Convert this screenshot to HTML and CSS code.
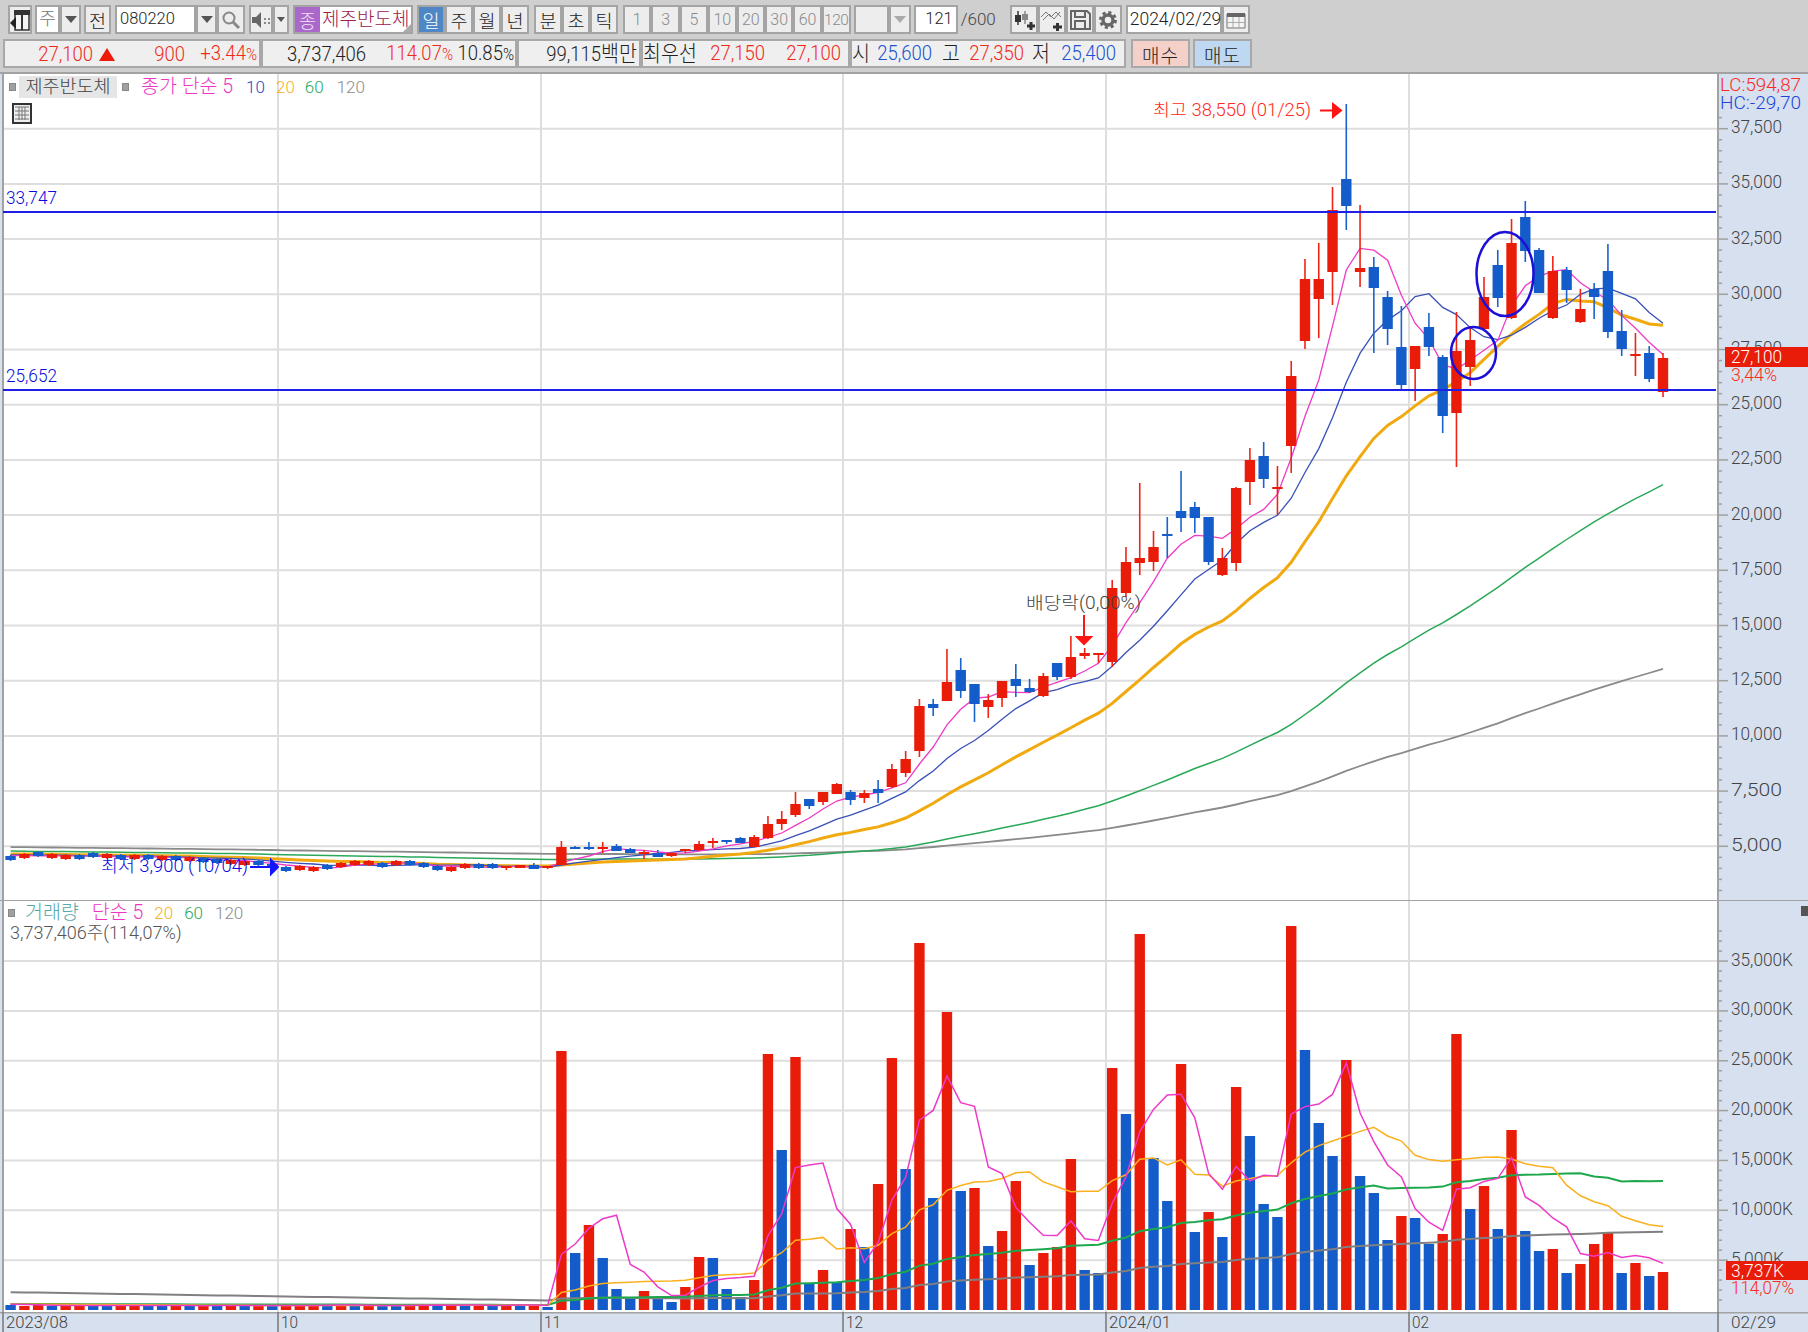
FILE: index.html
```html
<!DOCTYPE html>
<html lang="ko">
<head>
<meta charset="utf-8">
<title>제주반도체 차트</title>
<link rel="stylesheet" href="styles.css">
</head>
<body>
<div class="app">
  <div class="toolbar">
    <button class="btn w24"><svg width="20" height="24" viewBox="0 0 20 24"><path d="M5 3h14v19H5z" fill="#f4f4f4" stroke="#333" stroke-width="1.5"/><path d="M4 2h16v5H4z" fill="#333"/><path d="M12 7v15" stroke="#333" stroke-width="2"/><path d="M0 15l6-6v12z" fill="#222"/></svg></button>
    <div class="group mr3">
      <span class="field w25 dim center">주</span>
      <button class="btn w21"><i class="tri"></i></button>
    </div>
    <button class="btn w27 mr4">전</button>
    <div class="group mr4">
      <span class="field w81 pl">080220</span>
      <button class="btn w21"><i class="tri"></i></button>
      <button class="btn w28"><svg width="20" height="20" viewBox="0 0 20 20"><circle cx="8" cy="8" r="5.5" fill="none" stroke="#888" stroke-width="2"/><path d="M12 12l6 6" stroke="#888" stroke-width="3"/></svg></button>
    </div>
    <div class="group mr4">
      <button class="btn w24"><svg width="20" height="20" viewBox="0 0 20 20"><path d="M1 7h4l5-5v16l-5-5H1z" fill="#666"/><path d="M13 8h2v2h-2zM17 8h2v2h-2zM13 12h2v2h-2zM17 12h2v2h-2z" fill="#888"/></svg></button>
      <button class="btn w16"><i class="tri small"></i></button>
    </div>
    <div class="group mr4 namebox">
      <span class="badge">종</span>
      <span class="name">제주반도체<i class="corner"></i></span>
    </div>
    <div class="group mr5">
      <button class="btn w28 active">일</button>
      <button class="btn w28">주</button>
      <button class="btn w28">월</button>
      <button class="btn w28">년</button>
    </div>
    <div class="group mr5">
      <button class="btn w28">분</button>
      <button class="btn w28">초</button>
      <button class="btn w28">틱</button>
    </div>
    <div class="group mr3 off">
      <button class="btn w28">1</button>
      <button class="btn w28">3</button>
      <button class="btn w28">5</button>
      <button class="btn w28">10</button>
      <button class="btn w28">20</button>
      <button class="btn w28">30</button>
      <button class="btn w28">60</button>
      <button class="btn w29">120</button>
    </div>
    <div class="group mr3">
      <span class="btn w35"></span>
      <button class="btn w22"><i class="tri pale"></i></button>
    </div>
    <span class="field w44 right">121</span>
    <span class="count">/600</span>
    <div class="group mr4">
      <button class="btn w28"><svg width="24" height="24" viewBox="0 0 24 24"><path d="M6 3v14" stroke="#333" stroke-width="1.5"/><path d="M3 7h6v7H3z" fill="#333"/><path d="M13 3v13" stroke="#888" stroke-width="1.5"/><path d="M10 6h6v6h-6z" fill="#888"/><path d="M15 18h8M19 14v8" stroke="#333" stroke-width="3"/></svg></button>
      <button class="btn w28"><svg width="24" height="24" viewBox="0 0 24 24"><path d="M1 9l5-5 5 5 5-5 5 5M3 12l6-6 5 5 6-7" fill="none" stroke="#777"/><path d="M13 19h9M17.500 15v8" stroke="#333" stroke-width="3"/></svg></button>
      <button class="btn w28"><svg width="22" height="22" viewBox="0 0 22 22"><path d="M2 2h16l3 3v15H2z" fill="none" stroke="#666" stroke-width="2"/><path d="M6 2v6h10V2M6 20v-8h10v8" fill="none" stroke="#666" stroke-width="2"/></svg></button>
      <button class="btn w28"><svg width="20" height="20" viewBox="0 0 20 20"><circle cx="10" cy="10" r="5" fill="none" stroke="#666" stroke-width="3.500"/><circle cx="10" cy="10" r="7.500" fill="none" stroke="#666" stroke-width="3" stroke-dasharray="3.100 2.800"/></svg></button>
    </div>
    <div class="group">
      <span class="field w96 pl date">2024/02/29</span>
      <button class="btn w28"><svg width="20" height="18" viewBox="0 0 20 18"><path d="M1 3h18v14H1z" fill="#f4f4f4" stroke="#777"/><path d="M1 2h18v4H1z" fill="#666"/><path d="M7 6v11M13 6v11M1 11.500h18" stroke="#aaa"/></svg></button>
    </div>
  </div>

  <div class="quotebar">
    <div class="seg seg1">
      <span class="up">27,100</span><span class="arrow-cell"><i class="up-tri"></i></span><span class="up">900</span><span class="up">+3.44<em class="pct">%</em></span>
    </div>
    <div class="seg seg2">
      <span>3,737,406</span><span class="up">114.07<em class="pct">%</em></span><span>10.85<em class="pct">%</em></span>
    </div>
    <div class="seg seg3"><span>99,115<em class="ko">백만</em></span></div>
    <div class="seg seg4">
      <span class="ko">최우선</span><span class="up">27,150</span><span class="up">27,100</span>
    </div>
    <div class="seg seg5">
      <span class="ko">시</span><span class="down">25,600</span><span class="ko">고</span><span class="up">27,350</span><span class="ko">저</span><span class="down">25,400</span>
    </div>
    <button class="trade buy">매수</button>
    <button class="trade sell">매도</button>
  </div>

  <div class="chart">
    <section class="panel price-panel">
      <svg id="price" class="plot" width="1808" height="828" viewBox="0 72 1808 828"></svg>
      <div class="legend price-legend">
        <i class="dot"></i><span class="chip">제주반도체</span><i class="dot"></i>
        <span class="magenta ko-size lead">종가 단순 5</span><span class="blue">10</span><span class="orange">20</span><span class="green">60</span><span class="gray">120</span>
      </div>
      <svg class="table-icon" width="20" height="21" viewBox="0 0 20 21"><path d="M1 1h18v19H1z" fill="#eee" stroke="#333" stroke-width="2"/><path d="M3 4h14M3 8h14M3 12h14M3 16h14M7 4v13M10 4v13M13 4v13" stroke="#777"/></svg>
    </section>
    <section class="panel volume-panel">
      <svg id="volume" class="plot" width="1808" height="412" viewBox="0 900 1808 412"></svg>
      <div class="legend volume-legend">
        <div class="legend-row">
          <i class="dot"></i><span class="teal ko-size">거래량</span><span class="magenta ko-size">단순 5</span><span class="orange">20</span><span class="green">60</span><span class="gray">120</span>
        </div>
        <div class="legend-note">3,737,406주(114,07%)</div>
      </div>
    </section>
    <svg id="dates" class="plot" width="1808" height="20" viewBox="0 1312 1808 20"></svg>
  </div>
</div>
<script src="chart.js"></script>
</body>
</html>
```
FILE: styles.css
```css
* { box-sizing: border-box; }
html, body { margin: 0; padding: 0; background: #cfcfcf; }
body { font-family: Roboto, "Noto Sans CJK KR", "Liberation Sans", sans-serif; font-weight: 300; color: #222; }
.app { width: 1808px; height: 1332px; overflow: hidden; display: flex; flex-direction: column; }

.toolbar { display: flex; align-items: stretch; height: 29px; margin: 5px 0 0 8px; }
.group { display: flex; align-items: stretch; }
.btn { display: flex; align-items: center; justify-content: center; height: 29px; padding: 0; border: 2px solid #a4a4a4; background: #ededed; font: inherit; font-size: 18.500px; color: #222; overflow: hidden; }
.toolbar > .btn:first-child { margin-right: 3px; }
.field { display: flex; align-items: center; height: 29px; background: #fff; border: 2px solid #a4a4a4; font-size: 16.500px; line-height: 1; }
.center { justify-content: center; font-size: 18.500px; }
.dim { color: #777; }
.pl { padding-left: 3px; }
.right { justify-content: flex-end; padding-right: 3px; }
.w16 { width: 16px; } .w21 { width: 21px; } .w22 { width: 22px; } .w24 { width: 24px; } .w25 { width: 25px; }
.w27 { width: 27px; } .w28 { width: 28px; } .w29 { width: 29px; } .w35 { width: 35px; } .w44 { width: 44px; }
.w81 { width: 81px; } .w96 { width: 96px; }
.mr3 { margin-right: 3px; } .mr4 { margin-right: 4px; } .mr5 { margin-right: 5px; }
.date { font-size: 17.500px; padding-left: 2px; }
.tri { width: 0; height: 0; border-left: 6px solid transparent; border-right: 6px solid transparent; border-top: 7px solid #555; }
.tri.small { border-left-width: 4px; border-right-width: 4px; border-top-width: 5px; }
.tri.pale { border-top-color: #aaa; }
.namebox { border: 2px solid #a4a4a4; background: #fff; width: 120px; }
.badge { width: 25px; background: #ab68cb; color: #f2e4f8; font-size: 18.500px; display: flex; align-items: center; justify-content: center; }
.name { position: relative; flex: 1; color: #9b2050; font-size: 19px; line-height: 25px; padding-left: 2px; white-space: nowrap; overflow: hidden; }
.corner { position: absolute; right: 0; bottom: 0; width: 0; height: 0; border-left: 8px solid transparent; border-bottom: 8px solid #aaa; }
.active { background: #4f86c6; color: #fff; }
.off .btn { color: #8a8a8a; font-size: 16px; width: 28.400px; }
.off .w29 { font-size: 15.500px; letter-spacing: -0.400px; width: 29px; }
.count { width: 52px; font-size: 17px; line-height: 29px; padding-left: 3px; color: #444; }

.quotebar { display: flex; height: 29px; margin: 5px 0 0 3px; }
.seg { display: grid; align-items: center; height: 29px; border: 2px solid #a8a8a8; background: #efefef; font-size: 18.500px; white-space: nowrap; }
.seg span { text-align: right; display: block; transform: scaleY(1.12); line-height: 25px; }
.seg .ko, .ko { font-size: 19.500px; font-style: normal; }
.pct { font-size: 15px; font-style: normal; }
.seg1 { width: 258px; grid-template-columns: 88px 23px 69px 72px; }
.seg2 { width: 256px; grid-template-columns: 103px 87px 61px; }
.seg3 { width: 124px; grid-template-columns: 118px; }
.seg4 { width: 209px; grid-template-columns: 53px 69px 76px; }
.seg5 { width: 276px; grid-template-columns: 15px 65px 28px 64px 26px 66px; margin-right: 5px; }
.up { color: #f02a18; }
.down { color: #2050d0; }
.seg .arrow-cell { transform: none; text-align: left; padding-left: 6px; }
.up-tri { display: block; width: 0; height: 0; border-left: 8px solid transparent; border-right: 8px solid transparent; border-bottom: 13px solid #ee1c08; }
.trade { width: 59px; height: 29px; margin-right: 3px; border: 2px solid #a8a8a8; font: inherit; font-size: 19px; color: #222; padding: 0; letter-spacing: 1px; }
.buy { background: #f5d0c9; }
.sell { background: #bdd8f0; }

.chart { margin-top: 4px; display: flex; flex-direction: column; }
.panel { position: relative; }
.plot { display: block; }
.price-panel { height: 828px; }
.volume-panel { height: 412px; }

.legend { position: absolute; font-size: 17px; line-height: 20px; white-space: nowrap; }
.ko-size { font-size: 19.500px; }
.price-legend { left: 9px; top: 4px; display: flex; align-items: center; height: 22px; }
.dot { display: block; width: 7px; height: 8px; background: #a0a0a0; border: 1px solid #888; }
.chip { background: #e6e6e6; color: #444; width: 98px; height: 22px; margin: 0 5px 0 3px; text-align: center; font-size: 18.500px; line-height: 22px; }
.lead { margin: 0 13px 0 12px; }
.price-legend .blue { margin-right: 11px; }
.price-legend .orange { margin-right: 10px; }
.price-legend .green { margin-right: 13px; }
.magenta { color: #ee35c4; }
.blue { color: #2448c8; }
.orange { color: #f8ae20; }
.green { color: #2aa858; }
.gray { color: #8c8c8c; }
.teal { color: #55a8a8; }
.volume-legend { left: 8px; top: 3px; }
.legend-row { display: flex; align-items: center; height: 20px; }
.legend-row .teal { margin: 0 13px 0 10px; }
.legend-row .magenta { margin-right: 11px; }
.legend-row .orange { margin-right: 11px; }
.legend-row .green { margin-right: 12px; }
.legend-note { color: #555; padding-left: 2px; font-size: 18px; line-height: 20px; }
.table-icon { position: absolute; left: 12px; top: 31px; }

/* svg chart parts */
.bg-plot { fill: #fff; }
.bg-axis { fill: #d6e0ee; }
.grid { stroke: #dedede; stroke-width: 2; }
.frame { stroke: #a2a2a2; stroke-width: 2; }
.tick { stroke: #a0a0a0; stroke-width: 1.500; }
.hline { stroke: #1f1fe6; stroke-width: 2; }
.ring { fill: none; stroke: #1c0fd8; stroke-width: 2.500; }
.ma5 { fill: none; stroke: #ee3ac8; stroke-width: 1.300; }
.ma10 { fill: none; stroke: #3850b8; stroke-width: 1.300; }
.ma20 { fill: none; stroke: #f0aa10; stroke-width: 3; }
.ma60 { fill: none; stroke: #2aa858; stroke-width: 1.500; }
.ma120 { fill: none; stroke: #8a8a8a; stroke-width: 1.800; }
.vma5 { fill: none; stroke: #ee3ac8; stroke-width: 1.500; }
.vma20 { fill: none; stroke: #fbb01e; stroke-width: 1.500; }
.vma60 { fill: none; stroke: #1ea84e; stroke-width: 2; }
.vma120 { fill: none; stroke: #808080; stroke-width: 2; }
.fill-r { fill: #e81c08; }
.fill-b { fill: #135cc9; }
.wick-r { stroke: #ee2414; stroke-width: 1.600; }
.wick-b { stroke: #1a62cc; stroke-width: 1.600; }
.arrow-r { stroke: #ff1414; stroke-width: 2; fill: #ff1414; }
.arrow-b { stroke: #1414ff; stroke-width: 2; fill: #1414ff; }
.tag { fill: #e81c08; }
.dark-tick { stroke: #777; stroke-width: 1.500; }
.mini { fill: #555; }
text { font-family: Roboto, "Noto Sans CJK KR", "Liberation Sans", sans-serif; font-weight: 300; font-size: 17.500px; }
.t-axis { fill: #444; }
.t-red { fill: #ff2a20; }
.t-blue { fill: #2244dd; }
.t-line-blue { fill: #0a0ae0; }
.t-note { fill: #444; }
.t-white { fill: #fff; }
.t-date { fill: #444; font-size: 16.500px; }
```
FILE: chart.js
```js
(function () {
  var NS = 'http://www.w3.org/2000/svg';
  function add(p, tag, attrs, txt) {
    var e = document.createElementNS(NS, tag);
    for (var k in attrs) e.setAttribute(k, attrs[k]);
    if (txt !== undefined) e.textContent = txt;
    p.appendChild(e);
    return e;
  }
  function text(p, x, y, s, cls, len) {
    var a = { x: x, y: y, class: cls };
    if (len) { a.textLength = len; a.lengthAdjust = 'spacingAndGlyphs'; }
    return add(p, 'text', a, s);
  }
  function X(k) { return 1663 - 13.77 * k; }
  function ma(series, n, idx) {
    var s = 0;
    for (var i = idx - n + 1; i <= idx; i++) s += series[i];
    return s / n;
  }
  function maLine(p, series, n, offset, cls) {
    var pts = [];
    for (var i = offset; i < series.length; i++) {
      pts.push(X(series.length - 1 - i).toFixed(1) + ',' + ma(series, n, i).toFixed(1));
    }
    add(p, 'polyline', { points: pts.join(' '), class: cls });
  }

  /* newest first: colour, body top, body bottom, wick top, wick bottom (px) */
  var candles = [
    ['r',358,392,353,397],['b',353,379,346,382],['r',354,356,333,376],['b',331,349,310,356],['b',271,332,244,338],
    ['b',289,297,283,319],['r',309,322,289,323],['b',270,290,267,303],['r',271,318,256,319],['b',250,293,248,293],
    ['b',217,251,201,262],['r',243,318,219,319],['b',265,298,250,307],['r',297,329,277,329],['r',340,367,326,386],
    ['r',351,413,312,467],['b',357,416,355,433],['b',327,347,313,356],['r',346,369,346,401],['b',347,385,306,390],
    ['b',297,329,291,345],['b',267,288,257,353],['r',268,272,205,287],['b',179,206,104,230],['r',210,272,187,305],
    ['r',279,299,243,338],['r',279,341,259,349],['r',376,446,361,473],['r',487,489,466,515],['b',456,479,442,488],
    ['r',460,482,448,505],['r',488,563,487,571],['r',558,575,548,576],['b',517,562,517,565],['b',507,518,502,533],
    ['b',511,518,471,532],['b',534,536,517,558],['r',547,562,531,571],['r',558,563,483,575],['r',562,593,547,597],
    ['r',588,662,580,667],['r',653,655,653,663],['r',653,656,648,659],['r',657,677,636,679],['b',663,677,663,680],
    ['r',676,696,673,697],['b',688,692,679,693],['b',679,686,664,697],['r',681,698,681,707],['r',700,707,694,718],
    ['b',684,704,684,722],['b',670,691,658,698],['r',682,701,649,701],['b',704,708,699,716],['r',706,751,699,757],
    ['r',759,773,751,777],['r',769,787,764,788],['b',789,793,780,803],['r',793,798,790,803],['b',792,800,790,805],
    ['r',784,794,783,794],['r',792,802,792,805],['b',799,806,799,809],['r',804,815,792,817],['r',819,824,811,830],
    ['r',824,838,816,839],['r',837,847,835,847],['b',838,843,837,843],['b',840,842,840,844],['r',841,843,838,848],
    ['r',844,850,841,851],['r',849,851,849,853],['r',853,856,852,857],['b',853,857,850,857],['r',852,854,850,859],
    ['b',849,853,848,853],['b',846,851,844,851],['r',847,849,842,853],['b',847,849,842,850],['b',847,849,846,849],
    ['r',847,865,841,865],['r',866,868,866,869],['b',865,869,863,869],['r',865,868,865,868],['r',866,868,866,870]
  ];
  /* older, nearly flat stretch: colour + centre */
  var flat = 'b866 b866 r866 r869 b868 b865 b863 r863 b865 r863 r863 r865 b867 r869 r868 b869 b866 b863 r863 r862 b861 b860 r859 b858 r858 b857 r857 b857 r856 b855 b857 r857 r856 b854 r856 b858'.split(' ');
  flat.forEach(function (f) {
    var c = f.charAt(0), m = +f.slice(1);
    candles.push([c, m - 2, m + 2, m - 3, m + 3]);
  });
  var newestFirst = candles.slice();
  var seeds = [];
  for (var j = 119; j >= 1; j--) seeds.push(851 + (30 - j) * 0.133);
  var closes = seeds.concat(newestFirst.slice().reverse().map(function (c) {
    return c[0] === 'r' ? c[1] : c[2];
  }));

  var svg = document.getElementById('price');
  add(svg, 'rect', { x: 0, y: 72, width: 1808, height: 828, class: 'bg-plot' });
  add(svg, 'rect', { x: 1718, y: 72, width: 90, height: 828, class: 'bg-axis' });
  add(svg, 'rect', { x: 0, y: 72, width: 3, height: 828, class: 'bg-axis' });
  function py(v) { return 404.7 + (25000 - v) * 0.02208; }
  var verticals = [278, 541, 843, 1106, 1409];
  verticals.forEach(function (x) { add(svg, 'line', { x1: x, x2: x, y1: 73, y2: 900, class: 'grid' }); });
  for (var v = 5000; v <= 37500; v += 2500) {
    var gy = py(v);
    add(svg, 'line', { x1: 3, x2: 1718, y1: gy, y2: gy, class: 'grid' });
    add(svg, 'line', { x1: 1718, x2: 1728, y1: gy, y2: gy, class: 'tick' });
    text(svg, 1731, gy + 4.5, v.toLocaleString('en-US'), 't-axis', 51);
  }
  for (v = 2000; v <= 38000; v += 500) {
    if (v % 2500) add(svg, 'line', { x1: 1718, x2: 1722, y1: py(v), y2: py(v), class: 'tick' });
  }
  add(svg, 'line', { x1: 0, x2: 1808, y1: 73, y2: 73, class: 'frame' });
  add(svg, 'line', { x1: 3, x2: 3, y1: 73, y2: 900, class: 'frame' });
  add(svg, 'line', { x1: 1718, x2: 1718, y1: 73, y2: 900, class: 'frame' });

  maLine(svg, closes, 120, 119, 'ma120');
  maLine(svg, closes, 60, 119, 'ma60');
  maLine(svg, closes, 20, 119, 'ma20');
  maLine(svg, closes, 10, 119, 'ma10');
  maLine(svg, closes, 5, 119, 'ma5');

  newestFirst.forEach(function (c, k) {
    var x = X(k);
    add(svg, 'line', { x1: x, x2: x, y1: c[3], y2: c[4], class: 'wick-' + c[0] });
    add(svg, 'rect', { x: x - 5.2, y: c[1], width: 10.4, height: Math.max(c[2] - c[1], 2), class: 'fill-' + c[0] });
  });

  add(svg, 'line', { x1: 3, x2: 1716, y1: 212, y2: 212, class: 'hline' });
  add(svg, 'line', { x1: 3, x2: 1716, y1: 390, y2: 390, class: 'hline' });
  add(svg, 'ellipse', { cx: 1505, cy: 274, rx: 28.5, ry: 42, class: 'ring' });
  add(svg, 'ellipse', { cx: 1473.5, cy: 353, rx: 22.5, ry: 26, class: 'ring' });
  text(svg, 6, 204, '33,747', 't-line-blue', 51);
  text(svg, 6, 382, '25,652', 't-line-blue', 51);

  text(svg, 1153, 116, '최고 38,550 (01/25)', 't-red', 158);
  add(svg, 'path', { d: 'M1320 110.500h14', class: 'arrow-r' });
  add(svg, 'path', { d: 'M1333 104l8 6.500-8 6.500z', class: 'arrow-r' });
  text(svg, 1026, 609, '배당락(0,00%)', 't-note', 115);
  add(svg, 'path', { d: 'M1084 615v22', class: 'arrow-r' });
  add(svg, 'path', { d: 'M1077 637h14l-7 7z', class: 'arrow-r' });
  text(svg, 101, 872, '최저 3,900 (10/04)', 't-line-blue', 147);
  add(svg, 'path', { d: 'M250 867h21', class: 'arrow-b' });
  add(svg, 'path', { d: 'M271 860l7 7-7 7z', class: 'arrow-b' });

  text(svg, 1720, 91, 'LC:594,87', 't-red', 81);
  text(svg, 1720, 109, 'HC:-29,70', 't-blue', 81);
  add(svg, 'rect', { x: 1725, y: 347, width: 83, height: 20, class: 'tag' });
  text(svg, 1731, 363, '27,100', 't-white', 51);
  text(svg, 1731, 381, '3,44%', 't-red', 46);

  /* volume: top of bar in px, oldest first; baseline 1310 */
  var vbase = 1310;
  var vols = ('b1305 r1306 r1305 b1306 r1305 r1306 b1305 b1306 r1306 r1305 b1306 b1305 r1306 b1306 r1306 b1305 r1305 b1305 r1306 b1306 r1306 r1305 r1304 b1305 r1305 b1306 r1306 b1305 b1306 r1305 r1304 b1305 r1306 b1305 r1305 b1306 r1305 b1304 r1305 ' +
    'b1307 ' +
    'r1051 b1253 r1225 b1258 b1289 b1297 r1291 b1299 b1302 r1287 r1257 b1258 b1289 b1297 r1280 r1054 b1150 r1057 b1284 r1270 b1282 r1229 b1247 r1184 r1058 b1169 r943 b1198 r1012 b1191 r1188 b1246 r1231 r1181 b1265 r1253 r1247 r1159 b1270 b1273 ' +
    'r1068 b1114 r934 b1158 b1201 r1064 b1232 r1212 b1237 r1087 b1136 b1204 b1217 r926 b1050 b1123 b1156 r1060 b1176 b1193 b1240 r1216 b1218 b1244 r1234 r1034 b1209 r1186 b1229 r1130 b1231 b1251 r1249 b1273 r1264 r1244 r1233 b1273 r1263 ' +
    'b1276 r1272').split(' ').map(function (s) { return { c: s.charAt(0), top: +s.slice(1) }; });

  var vsvg = document.getElementById('volume');
  add(vsvg, 'rect', { x: 0, y: 900, width: 1808, height: 412, class: 'bg-plot' });
  add(vsvg, 'rect', { x: 1718, y: 900, width: 90, height: 412, class: 'bg-axis' });
  add(vsvg, 'rect', { x: 0, y: 900, width: 3, height: 412, class: 'bg-axis' });
  verticals.forEach(function (x) { add(vsvg, 'line', { x1: x, x2: x, y1: 900, y2: 1312, class: 'grid' }); });
  for (var i = 1; i <= 7; i++) {
    var ly = 1310 - i * 49.85;
    add(vsvg, 'line', { x1: 3, x2: 1718, y1: ly, y2: ly, class: 'grid' });
    add(vsvg, 'line', { x1: 1718, x2: 1728, y1: ly, y2: ly, class: 'tick' });
    text(vsvg, 1731, ly + 4.5, (i * 5000).toLocaleString('en-US') + 'K', 't-axis', i === 1 ? 53 : 62);
  }
  for (i = 1; i <= 38; i++) {
    if (i % 5) add(vsvg, 'line', { x1: 1718, x2: 1722, y1: 1310 - i * 9.97, y2: 1310 - i * 9.97, class: 'tick' });
  }
  add(vsvg, 'line', { x1: 0, x2: 1808, y1: 900, y2: 900, class: 'frame' });
  add(vsvg, 'line', { x1: 3, x2: 3, y1: 900, y2: 1312, class: 'frame' });
  add(vsvg, 'line', { x1: 1718, x2: 1718, y1: 900, y2: 1312, class: 'frame' });
  add(vsvg, 'rect', { x: 1801, y: 906, width: 7, height: 10, class: 'mini' });

  vols.forEach(function (b, idx) {
    var x = X(vols.length - 1 - idx);
    add(vsvg, 'rect', { x: x - 5.2, y: b.top, width: 10.4, height: vbase - b.top, class: 'fill-' + b.c });
  });
  var vseed = [];
  for (j = 119; j >= 1; j--) vseed.push(j > 60 ? 1280 : 1304);
  var vseries = vseed.concat(vols.map(function (b) { return b.top; }));
  maLine(vsvg, vseries, 120, 119, 'vma120');
  maLine(vsvg, vseries, 60, 119, 'vma60');
  maLine(vsvg, vseries, 20, 119, 'vma20');
  maLine(vsvg, vseries, 5, 119, 'vma5');

  add(vsvg, 'rect', { x: 1726, y: 1261, width: 82, height: 19, class: 'tag' });
  text(vsvg, 1731, 1277, '3,737K', 't-white', 53);
  text(vsvg, 1731, 1294, '114,07%', 't-red', 63);

  var dsvg = document.getElementById('dates');
  add(dsvg, 'rect', { x: 0, y: 1312, width: 1808, height: 20, class: 'bg-axis' });
  add(dsvg, 'line', { x1: 0, x2: 1808, y1: 1312.5, y2: 1312.5, class: 'frame' });
  [[278, '10'], [541, '11'], [843, '12'], [1106, '2024/01'], [1409, '02'], [1718, '02/29']].forEach(function (d) {
    add(dsvg, 'line', { x1: d[0], x2: d[0], y1: 1312, y2: 1332, class: 'dark-tick' });
    text(dsvg, d[0] === 1718 ? 1731 : d[0] + 3, 1328, d[1], 't-date', d[1].length === 7 ? 62 : (d[1].length === 2 ? 17 : 45));
  });
  text(dsvg, 6, 1328, '2023/08', 't-date', 62);
  add(dsvg, 'line', { x1: 3, x2: 3, y1: 1312, y2: 1332, class: 'dark-tick' });
})();
```
